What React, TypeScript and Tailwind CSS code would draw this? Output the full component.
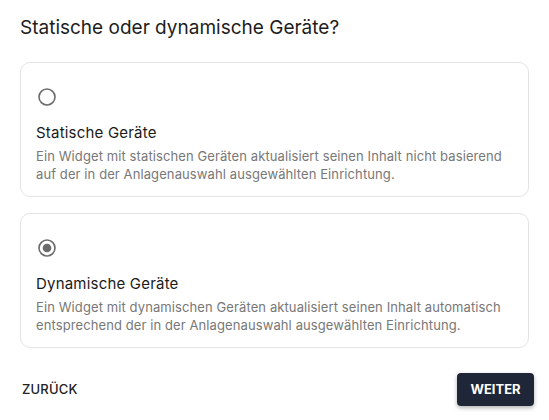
import React, { useState } from "react";

function Radio({ checked }: { checked: boolean }) {
  return (
    <svg width="20" height="20" viewBox="0 0 24 24" className="block">
      <circle cx="12" cy="12" r="9.6" fill="none" stroke="#6b6b6b" strokeWidth="1.9" />
      {checked && <circle cx="12" cy="12" r="5.2" fill="#6b6b6b" />}
    </svg>
  );
}

function Card({
  checked,
  title,
  desc,
  onClick,
}: {
  checked: boolean;
  title: string;
  desc: string;
  onClick: () => void;
}) {
  return (
    <div
      onClick={onClick}
      className="border border-[#e4e4e4] rounded-[10px] pl-[15px] pr-4 pt-[24px] pb-[13px] cursor-pointer bg-white"
    >
      <div className="pl-[1px]">
        <Radio checked={checked} />
      </div>
      <div className="mt-[15px] text-[15px] leading-[21px] font-normal tracking-[0.2px] text-[#1a1a1a]">{title}</div>
      <div className="mt-[4px] text-[13px] leading-[18px] tracking-[0.1px] text-[#787878]">{desc}</div>
    </div>
  );
}

export default function App() {
  const [sel, setSel] = useState<"static" | "dynamic">("dynamic");
  return (
    <div
      className="w-[549px] h-[420px] bg-white"
      style={{ fontFamily: "Inter, 'Noto Sans', sans-serif" }}
    >
      <div className="px-5 pt-[14px]">
        <h1 className="text-[19px] leading-[28px] font-normal text-[#1d1d1d]">
          Statische oder dynamische Geräte?
        </h1>
        <div className="mt-[20px] flex flex-col gap-4">
          <Card
            checked={sel === "static"}
            onClick={() => setSel("static")}
            title="Statische Geräte"
            desc="Ein Widget mit statischen Geräten aktualisiert seinen Inhalt nicht basierend auf der in der Anlagenauswahl ausgewählten Einrichtung."
          />
          <Card
            checked={sel === "dynamic"}
            onClick={() => setSel("dynamic")}
            title="Dynamische Geräte"
            desc="Ein Widget mit dynamischen Geräten aktualisiert seinen Inhalt automatisch entsprechend der in der Anlagenauswahl ausgewählten Einrichtung."
          />
        </div>
      </div>
      <div className="mt-[25px] flex items-center justify-between pl-[22px] pr-[15px]">
        <button className="text-[13px] font-medium text-[#222] tracking-[0.2px]">ZURÜCK</button>
        <button className="h-[33px] w-[77px] rounded-[4px] bg-[#1f2638] text-white text-[13px] font-bold shadow-[0_2px_4px_rgba(0,0,0,0.3)]">
          WEITER
        </button>
      </div>
    </div>
  );
}
